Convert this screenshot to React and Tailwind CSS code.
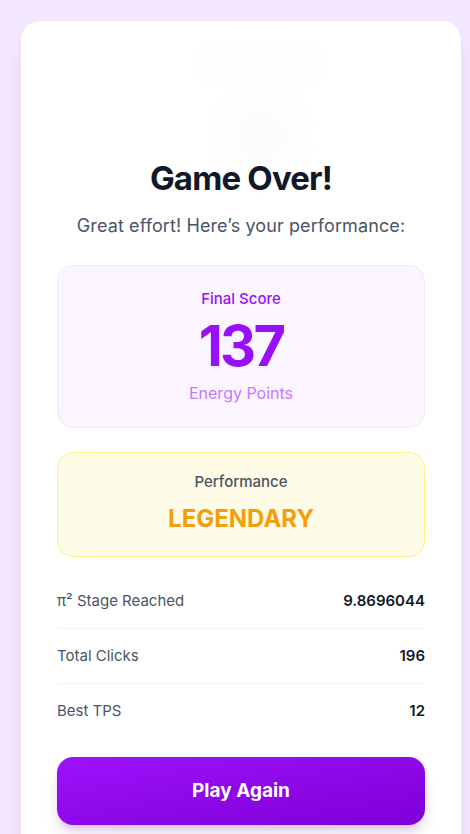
import React from "react";

const stats = [
  { label: "π² Stage Reached", value: "9.8696044" },
  { label: "Total Clicks", value: "196" },
  { label: "Best TPS", value: "12" },
];

export default function App() {
  return (
    <div
      className="h-screen overflow-hidden bg-[#f3e8ff] pt-5 pl-5"
      style={{ fontFamily: "Inter, 'Noto Sans', sans-serif" }}
    >
      {/* card */}
      <div className="relative w-[442px] min-h-[900px] rounded-[20px] border border-[#ece6f5] bg-white shadow-xl px-9 pt-[139px]">
        {/* faint blurred decorations */}
        <div className="pointer-events-none absolute left-[180px] top-[32px] h-[22px] w-[120px] rounded-full bg-gray-100/20 blur-md" />
        <div className="pointer-events-none absolute left-[205px] top-[80px] h-[70px] w-[70px] rounded-full bg-stone-100/40 blur-lg" />

        <div className="relative text-center">
          <h1 className="text-[33px] leading-9 font-bold text-[#111827] tracking-tight">Game Over!</h1>
          <p className="mt-4 text-lg leading-7 text-gray-600 tracking-[0.1px]">
            Great effort! Here’s your performance:
          </p>
        </div>

        {/* final score */}
        <div className="relative mt-[25px] rounded-2xl border border-purple-100 bg-[#faf5ff] pt-[22px] pb-[22px] text-center">
          <div className="text-[15px] leading-[22px] font-medium text-[#9810fa]">Final Score</div>
          <div className="mt-2 text-[56px] leading-[56px] font-bold text-[#9810fa] tracking-tighter">137</div>
          <div className="mt-[7px] text-base leading-6 text-[#c27aff]">Energy Points</div>
        </div>

        {/* performance */}
        <div className="relative mt-6 rounded-2xl border border-yellow-200 bg-[#fefbe6] pt-[18px] pb-[21px] text-center">
          <div className="text-[15px] leading-[22px] font-medium text-gray-600">Performance</div>
          <div className="mt-[10px] text-2xl leading-8 font-bold text-[#f59e0b]">LEGENDARY</div>
        </div>

        {/* stats */}
        <div className="relative mt-[17px]">
          {stats.map((s, i) => (
            <div
              key={s.label}
              className={`flex items-center justify-between py-4 text-[15px] leading-[22px] ${
                i < stats.length - 1 ? "border-b border-gray-100" : ""
              }`}
            >
              <span className="text-gray-600">{s.label}</span>
              <span className="font-semibold text-gray-900">{s.value}</span>
            </div>
          ))}
        </div>

        <button className="relative mt-[19px] w-full rounded-2xl bg-gradient-to-br from-[#9d12fb] to-[#7e00d6] py-5 text-[19px] leading-7 font-bold text-white shadow-lg shadow-purple-900/20">
          Play Again
        </button>
      </div>
    </div>
  );
}
